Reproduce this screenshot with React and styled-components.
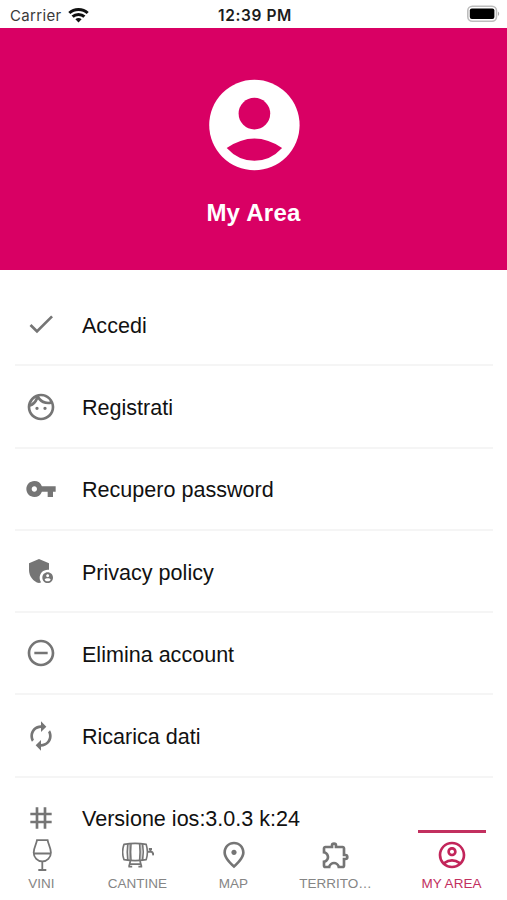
import { useState } from "react";
import styled, { createGlobalStyle } from "styled-components";
import {
  MdAdminPanelSettings,
  MdAutorenew,
  MdCheck,
  MdOutlineAccountCircle,
  MdOutlineExtension,
  MdOutlineFace,
  MdOutlineFmdGood,
  MdRemoveCircleOutline,
  MdTag,
  MdVpnKey,
} from "react-icons/md";

const GlobalStyle = createGlobalStyle`
  * {
    box-sizing: border-box;
  }

  body {
    margin: 0;
    background-color: #fff;
    font-family: "Liberation Sans", Arial, sans-serif;
  }
`;

const Screen = styled.div`
  display: flex;
  flex-direction: column;
  width: 100%;
  height: 100vh;
  overflow: hidden;
  background-color: #fff;
`;

const StatusBar = styled.div`
  display: grid;
  grid-template-columns: 1fr auto 1fr;
  align-items: center;
  flex: none;
  height: 28px;
  padding: 2px 7px 0 10px;
  font-family: Inter, sans-serif;
  font-size: 15px;
  color: #3a3a3a;
`;

const Carrier = styled.div`
  display: flex;
  align-items: center;
  gap: 6px;
  letter-spacing: 0.35px;
`;

const Clock = styled.div`
  color: #1c1c1c;
  font-size: 15.5px;
  font-weight: 600;
  letter-spacing: 0.6px;
`;

const BatteryIcon = styled.svg`
  justify-self: end;
  margin-top: -2px;
`;

const Header = styled.header`
  display: flex;
  flex-direction: column;
  align-items: center;
  flex: none;
  height: 242px;
  padding-top: 51px;
  background-color: #d90064;
`;

const Title = styled.h1`
  margin: 28px 0 0;
  font-size: 24px;
  line-height: 28px;
  font-weight: 700;
  letter-spacing: 0.25px;
  color: #fff;
`;

const Menu = styled.div`
  flex: 1;
  min-height: 0;
  overflow: hidden;
  padding: 14.2px 14px 0 15px;
`;

const MenuRow = styled.div`
  display: flex;
  align-items: center;
  height: 82.25px;
  padding-left: 10px;
  border-bottom: 2px solid #f5f5f5;
  font-size: 21.55px;
  color: #111;
  cursor: pointer;

  svg {
    flex: none;
    width: 32px;
    height: 32px;
    margin-right: 25px;
    color: #757575;
  }
`;

const MenuLabel = styled.span`
  padding-top: 3px;
`;

const TabBar = styled.nav`
  display: grid;
  grid-template-columns: 83px 109px 83px 121px 1fr;
  flex: none;
  height: 70px;
  background-color: #fff;
`;

const Tab = styled.button`
  display: flex;
  flex-direction: column;
  align-items: center;
  padding: 0;
  border: none;
  background: none;
  font-family: inherit;
  font-size: 13.5px;
  color: ${({ $active }) => ($active ? "#c2305f" : "#858585")};
  cursor: pointer;

  svg {
    width: 32px;
    height: 32px;
    margin-top: 6px;
    color: ${({ $active }) => ($active ? "#c2255a" : "#757575")};
  }
`;

const Indicator = styled.span`
  width: 68px;
  height: 3px;
  background-color: ${({ $active }) => ($active ? "#c2305f" : "transparent")};
`;

const TabLabel = styled.span`
  margin-top: 5px;
  line-height: 16px;
`;

const WifiIcon = () => (
  <svg width="21" height="17" viewBox="0 0 21 17" fill="none" stroke="#111" strokeWidth="3">
    <path d="M1.3 6C6.3 1.2 14.7 1.2 19.7 6" />
    <path d="M4.6 9.7C7.7 6.7 13.3 6.7 16.4 9.7" />
    <path d="M7.4 12.3C9.2 10.7 11.8 10.7 13.6 12.3L10.5 15.4Z" fill="#111" stroke="none" />
  </svg>
);

const Battery = () => (
  <BatteryIcon width="34" height="18" viewBox="0 0 34 18">
    <rect x="1.8" y="1.3" width="28.7" height="15" rx="4.5" fill="#fff" stroke="#bdbdbd" strokeWidth="1.6" />
    <rect x="3.8" y="3.6" width="24.6" height="10.4" rx="2" fill="#000" />
    <path d="M32 6.5C33.6 7.2 33.6 10.3 32 11Z" fill="#aaa" />
  </BatteryIcon>
);

const Avatar = () => (
  <svg width="92" height="92" viewBox="0 0 92 92">
    <circle cx="46.4" cy="46" r="45.2" fill="#fff" />
    <circle cx="46.4" cy="34.6" r="15.8" fill="#d90064" />
    <path d="M18.7 69Q46.4 50 74.1 69Q62.4 81.8 46.4 81.8T18.7 69Z" fill="#d90064" />
  </svg>
);

const GlassIcon = () => (
  <svg viewBox="0 0 32 32" fill="none" stroke="#757575" strokeWidth="1.8">
    <path d="M11 1.2H21.6C22.2 5.2 24.9 9 24.9 13.4C24.9 18.6 21 22.4 16.3 22.4S7.7 18.6 7.7 13.4C7.7 9 10.4 5.2 11 1.2Z" />
    <path d="M7.7 14.5H24.9M16.3 22.4V31" />
    <path d="M12.3 31H20.3" strokeWidth="2" />
  </svg>
);

const BarrelIcon = () => (
  <svg viewBox="0 0 32 32" fill="none" stroke="#757575" strokeWidth="1.6">
    <path d="M2 5.4Q13 3.3 24.2 5.4Q26.6 13 24.2 20.6Q13 22.7 2 20.6Q-.8 13 2 5.4Z" />
    <path d="M5.8 4.8Q4.7 13 5.8 21.2M9 4.4Q8.2 13 9 21.6M17.6 4.4Q18.6 13 17.6 21.6M20.6 4.8Q21.9 13 20.6 21.2" />
    <path d="M7.3 4.8V21.3M19 4.8V21.3" strokeWidth="0.7" />
    <path d="M8.4 22L6.9 27.8M18 22L19.6 27.8M6.4 27.6H10.2M16.4 27.6H20.2M8.3 25.2H18.2" strokeWidth="1.7" />
    <path d="M25.6 12.8H29.4Q31 13 31.4 16.4M28.4 9.8V13M26.8 10H30" strokeWidth="2" />
  </svg>
);

const menuItems = [
  { id: 1, label: "Accedi", Icon: MdCheck },
  { id: 2, label: "Registrati", Icon: MdOutlineFace },
  { id: 3, label: "Recupero password", Icon: MdVpnKey },
  { id: 4, label: "Privacy policy", Icon: MdAdminPanelSettings },
  { id: 5, label: "Elimina account", Icon: MdRemoveCircleOutline },
  { id: 6, label: "Ricarica dati", Icon: MdAutorenew },
  { id: 7, label: "Versione ios:3.0.3 k:24", Icon: MdTag },
];

const tabs = [
  { id: "vini", label: "VINI", Icon: GlassIcon },
  { id: "cantine", label: "CANTINE", Icon: BarrelIcon },
  { id: "map", label: "MAP", Icon: MdOutlineFmdGood },
  { id: "territorio", label: "TERRITO…", Icon: MdOutlineExtension },
  { id: "area", label: "MY AREA", Icon: MdOutlineAccountCircle },
];

export default function App() {
  const [activeTab, setActiveTab] = useState("area");

  return (
    <>
      <GlobalStyle />
      <Screen>
        <StatusBar>
          <Carrier>
            Carrier
            <WifiIcon />
          </Carrier>
          <Clock>12:39 PM</Clock>
          <Battery />
        </StatusBar>

        <Header>
          <Avatar />
          <Title>My Area</Title>
        </Header>

        <Menu>
          {menuItems.map(({ id, label, Icon }) => (
            <MenuRow key={id}>
              <Icon />
              <MenuLabel>{label}</MenuLabel>
            </MenuRow>
          ))}
        </Menu>

        <TabBar>
          {tabs.map(({ id, label, Icon }) => (
            <Tab key={id} $active={id === activeTab} onClick={() => setActiveTab(id)}>
              <Indicator $active={id === activeTab} />
              <Icon />
              <TabLabel>{label}</TabLabel>
            </Tab>
          ))}
        </TabBar>
      </Screen>
    </>
  );
}
